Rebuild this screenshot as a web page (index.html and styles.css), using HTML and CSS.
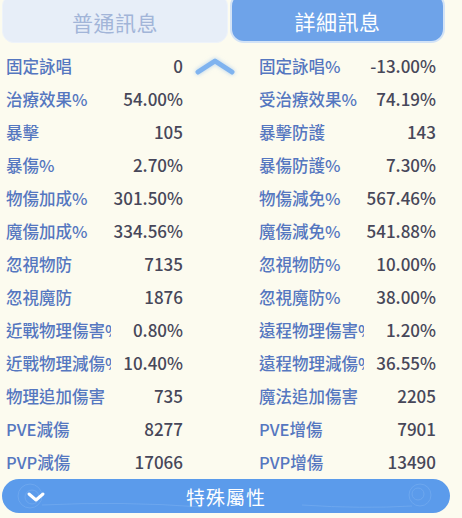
FILE: index.html
```html
<!DOCTYPE html>
<html lang="zh-Hant">
<head>
<meta charset="utf-8">
<link rel="stylesheet" href="styles.css">
</head>
<body>
<div class="page">
  <div class="tabs">
    <div class="tab tab-off">普通訊息</div>
    <div class="tab tab-on">詳細訊息</div>
  </div>
  <div class="stats">
    <svg class="up" width="42" height="22" viewBox="0 0 42 22"><path d="M4 17 L21 6 L38 17" fill="none" stroke="#7fb3ef" stroke-width="5" stroke-linecap="round" stroke-linejoin="round"/></svg>
    <div class="row"><div class="cell"><span class="lab">固定詠唱</span><span class="val">0</span></div><div></div><div class="cell"><span class="lab">固定詠唱%</span><span class="val">-13.00%</span></div></div>
    <div class="row"><div class="cell"><span class="lab">治療效果%</span><span class="val">54.00%</span></div><div></div><div class="cell"><span class="lab">受治療效果%</span><span class="val">74.19%</span></div></div>
    <div class="row"><div class="cell"><span class="lab">暴擊</span><span class="val">105</span></div><div></div><div class="cell"><span class="lab">暴擊防護</span><span class="val">143</span></div></div>
    <div class="row"><div class="cell"><span class="lab">暴傷%</span><span class="val">2.70%</span></div><div></div><div class="cell"><span class="lab">暴傷防護%</span><span class="val">7.30%</span></div></div>
    <div class="row"><div class="cell"><span class="lab">物傷加成%</span><span class="val">301.50%</span></div><div></div><div class="cell"><span class="lab">物傷減免%</span><span class="val">567.46%</span></div></div>
    <div class="row"><div class="cell"><span class="lab">魔傷加成%</span><span class="val">334.56%</span></div><div></div><div class="cell"><span class="lab">魔傷減免%</span><span class="val">541.88%</span></div></div>
    <div class="row"><div class="cell"><span class="lab">忽視物防</span><span class="val">7135</span></div><div></div><div class="cell"><span class="lab">忽視物防%</span><span class="val">10.00%</span></div></div>
    <div class="row"><div class="cell"><span class="lab">忽視魔防</span><span class="val">1876</span></div><div></div><div class="cell"><span class="lab">忽視魔防%</span><span class="val">38.00%</span></div></div>
    <div class="row"><div class="cell"><span class="lab">近戰物理傷害%</span><span class="val">0.80%</span></div><div></div><div class="cell"><span class="lab">遠程物理傷害%</span><span class="val">1.20%</span></div></div>
    <div class="row"><div class="cell"><span class="lab">近戰物理減傷%</span><span class="val">10.40%</span></div><div></div><div class="cell"><span class="lab">遠程物理減傷%</span><span class="val">36.55%</span></div></div>
    <div class="row"><div class="cell"><span class="lab">物理追加傷害</span><span class="val">735</span></div><div></div><div class="cell"><span class="lab">魔法追加傷害</span><span class="val">2205</span></div></div>
    <div class="row"><div class="cell"><span class="lab">PVE減傷</span><span class="val">8277</span></div><div></div><div class="cell"><span class="lab">PVE增傷</span><span class="val">7901</span></div></div>
    <div class="row"><div class="cell"><span class="lab">PVP減傷</span><span class="val">17066</span></div><div></div><div class="cell"><span class="lab">PVP增傷</span><span class="val">13490</span></div></div>
  </div>
  <div class="bar">
    <svg class="deco" width="448" height="34" viewBox="0 0 448 34">
      <g fill="none" stroke="#8dbcf3" stroke-width="1" opacity="0.35">
        <circle cx="28" cy="17" r="12"/>
        <circle cx="30" cy="18" r="7"/>
        <path d="M40 26 Q120 22 200 28"/>
        <circle cx="418" cy="16" r="11"/>
        <circle cx="416" cy="15" r="6"/>
        <path d="M410 27 Q360 30 300 26"/>
      </g>
    </svg>
    <svg class="down" width="20" height="12" viewBox="0 0 20 12"><path d="M3 3 L10 9 L17 3" fill="none" stroke="#ffffff" stroke-width="3" stroke-linecap="round" stroke-linejoin="round"/></svg>
    <span class="bar-text">特殊屬性</span>
  </div>
</div>
</body>
</html>
```

FILE: styles.css
```css
html, body {
  margin: 0;
  padding: 0;
  background: #fcfbef;
}
.page {
  width: 462px;
  height: 518px;
  overflow: hidden;
  font-family: "Noto Sans CJK TC", "Noto Sans", sans-serif;
}
.tabs {
  display: flex;
  padding: 0 19px 0 2px;
  gap: 4px;
  height: 44px;
  align-items: flex-end;
}
.tab {
  display: flex;
  align-items: center;
  justify-content: center;
  font-size: 21px;
  letter-spacing: 0.5px;
  border-radius: 12px;
  box-sizing: border-box;
  padding-top: 6px;
  align-self: flex-start;
}
.tab-off {
  width: 227px;
  height: 49px;
  margin-top: -6px;
  background: #e7eef8;
  color: #a2b5d8;
  border: 1px solid #eef3fa;
}
.tab-on {
  width: 212px;
  height: 47px;
  margin-top: -6px;
  background: #6ea3e9;
  color: #ffffff;
  box-shadow: 0 0 0 2px #d3e3f6;
}
.stats {
  position: relative;
  padding: 5px 0 0 6px;
}
.up {
  position: absolute;
  left: 194px;
  top: 11px;
  filter: drop-shadow(0 0 2px rgba(127, 179, 239, 0.6));
}
.row {
  display: grid;
  grid-template-columns: 177px 76px 177px;
  height: 33px;
  align-items: center;
}
.cell {
  display: flex;
  align-items: center;
  font-size: 16.5px;
  font-weight: 500;
}
.lab {
  width: 105px;
  flex: none;
  overflow: hidden;
  white-space: nowrap;
  color: #5577c0;
}
.val {
  flex: 1;
  text-align: right;
  color: #474759;
  font-size: 17px;
  white-space: nowrap;
}
.bar {
  position: relative;
  margin: 1px 0 0 2px;
  width: 448px;
  height: 34px;
  border-radius: 17px;
  background: #5b9beb;
  display: flex;
  align-items: center;
  justify-content: center;
}
.deco {
  position: absolute;
  left: 0;
  top: 0;
}
.down {
  position: absolute;
  left: 24px;
  top: 12px;
}
.bar-text {
  position: relative;
  color: #ffffff;
  font-size: 19px;
  letter-spacing: 1px;
}
```
